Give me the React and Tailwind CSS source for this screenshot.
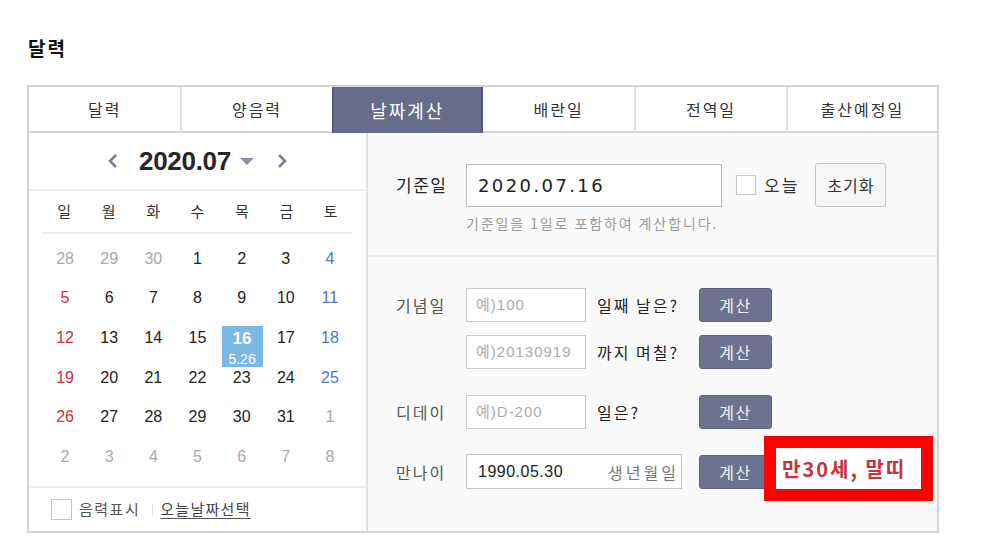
import React from 'react'

const kr = "font-['Noto_Sans_CJK_KR',sans-serif]"
const num = "font-['Liberation_Sans','Noto_Sans_CJK_KR',sans-serif]"

const tabs = ['달력', '양음력', '날짜계산', '배란일', '전역일', '출산예정일']

// [day, isOtherMonth]
const weeks = [
  [[28, 1], [29, 1], [30, 1], [1], [2], [3], [4]],
  [[5], [6], [7], [8], [9], [10], [11]],
  [[12], [13], [14], [15], [16], [17], [18]],
  [[19], [20], [21], [22], [23], [24], [25]],
  [[26], [27], [28], [29], [30], [31], [1, 1]],
  [[2, 1], [3, 1], [4, 1], [5, 1], [6, 1], [7, 1], [8, 1]],
]

const dayColor = (d, col) => {
  if (d[1]) return 'text-[#a9a9a9]'
  if (col === 0) return 'text-[#cc2f3b]'
  if (col === 6) return 'text-[#4f77c4]'
  return 'text-[#222]'
}

const CalcButton = () => (
  <button className={`${kr} w-[73px] h-[34px] rounded-[3px] bg-[#6c7290] border border-[#5c627f] text-[16px] leading-none text-[#f2f2f2] tracking-[1.5px]`}>
    계산
  </button>
)

const Calendar = () => (
  <div className="w-[339px] border-r-2 border-[#e2e2e2] bg-white flex flex-col">
    <div className="h-[58px] border-b-2 border-[#eeeeee] flex items-center justify-center">
      <svg width="12" height="16" viewBox="0 0 12 16" className="mr-[20px]">
        <polyline points="9,2 3,8 9,14" fill="none" stroke="#7c8199" strokeWidth="2.6" />
      </svg>
      <span className={`${num} text-[26px] font-bold tracking-[-0.3px] text-[#262626] leading-none`}>2020.07</span>
      <svg width="14" height="8" viewBox="0 0 14 8" className="ml-[9px] mt-[2px]">
        <polygon points="0,0 14,0 7,7" fill="#8b90a6" />
      </svg>
      <svg width="12" height="16" viewBox="0 0 12 16" className="ml-[22px]">
        <polyline points="3,2 9,8 3,14" fill="none" stroke="#7c8199" strokeWidth="2.6" />
      </svg>
    </div>
    <div className="mx-[13px] h-[43px] border-b-2 border-[#eeeeee] grid grid-cols-7 items-center">
      {['일', '월', '화', '수', '목', '금', '토'].map((w) => (
        <span key={w} className={`${kr} text-center text-[15px] text-[#333]`}>{w}</span>
      ))}
    </div>
    <div className="px-[14px] pt-[5px] grid grid-cols-7 auto-rows-[39.6px]">
      {weeks.map((week, r) =>
        week.map((d, c) => {
          if (r === 2 && c === 4) {
            return (
              <div key={`${r}-${c}`} className="relative">
                <div className="absolute left-[2px] top-[8px] w-[41px] h-[41px] bg-[#7bb8e5] flex flex-col items-center">
                  <span className={`${num} text-[17px] font-bold text-white leading-none mt-[4px]`}>16</span>
                  <span className={`${num} text-[14px] text-white leading-none mt-[5px]`}>5.26</span>
                </div>
              </div>
            )
          }
          return (
            <div key={`${r}-${c}`} className={`${num} flex items-center justify-center text-[16px] ${dayColor(d, c)}`}>
              {d[0]}
            </div>
          )
        })
      )}
    </div>
    <div className="mt-auto h-[45px] border-t-2 border-[#eeeeee] flex items-center pl-[22px]">
      <span className="w-[21px] h-[21px] border border-[#c6c6c6] bg-white" />
      <span className={`${kr} ml-[7px] text-[15px] text-[#555] tracking-[1.5px]`}>음력표시</span>
      <span className="ml-[12px] w-px h-[12px] bg-[#dddddd]" />
      <span className={`${kr} ml-[7px] text-[15px] text-[#444] tracking-[1.3px] underline underline-offset-[3px] decoration-[#555]`}>오늘날짜선택</span>
    </div>
  </div>
)

const RowLabel = ({ children }) => (
  <span className={`${kr} w-[70px] text-[16px] text-[#555] tracking-[2px]`}>{children}</span>
)

const SmallInput = ({ placeholder }) => (
  <div className={`${num} w-[120px] h-[34px] border border-[#c9c9c9] bg-white flex items-center pl-[9px] text-[15px] text-[#aaa] tracking-[1px]`}>
    {placeholder}
  </div>
)

const Calc = () => (
  <div className="flex-1 bg-[#fafafa] flex flex-col">
    <div className="h-[124px] border-b-2 border-[#efefef] pl-[28px] pt-[30px]">
      <div className="flex items-center">
        <span className={`${kr} w-[70px] text-[17px] text-[#222] tracking-[1.5px]`}>기준일</span>
        <div className="w-[256px] h-[43px] border border-[#bdbdbd] bg-white flex items-center pl-[11px]">
          <span className="font-['DejaVu_Sans',sans-serif] text-[18px] tracking-[2.4px] text-[#222]">2020.07.16</span>
        </div>
        <span className="ml-[14px] w-[20px] h-[20px] border border-[#c9c9c9] bg-white" />
        <span className={`${kr} ml-[8px] text-[17px] text-[#333] tracking-[2px]`}>오늘</span>
        <button className={`${kr} ml-[16px] w-[71px] h-[44px] rounded-[3px] border border-[#c4c4c4] bg-[#f6f6f6] text-[16px] text-[#333] tracking-[1px]`}>
          초기화
        </button>
      </div>
      <p className={`${kr} ml-[70px] mt-[6px] text-[14px] text-[#9a9a9a] leading-[20px] tracking-[1.9px]`}>기준일을 1일로 포함하여 계산합니다.</p>
    </div>
    <div className="pl-[28px] pt-[31px] flex flex-col">
      <div className="flex items-center">
        <RowLabel>기념일</RowLabel>
        <div className="w-[233px] flex items-center">
          <SmallInput placeholder="예)100" />
          <span className={`${kr} ml-[11px] text-[16px] text-[#222] tracking-[2px]`}>일째 날은?</span>
        </div>
        <CalcButton />
      </div>
      <div className="flex items-center mt-[13px]">
        <span className="w-[70px]" />
        <div className="w-[233px] flex items-center">
          <SmallInput placeholder="예)20130919" />
          <span className={`${kr} ml-[11px] text-[16px] text-[#222] tracking-[2px]`}>까지 며칠?</span>
        </div>
        <CalcButton />
      </div>
      <div className="flex items-center mt-[26px]">
        <RowLabel>디데이</RowLabel>
        <div className="w-[233px] flex items-center">
          <SmallInput placeholder="예)D-200" />
          <span className={`${kr} ml-[11px] text-[16px] text-[#222] tracking-[2px]`}>일은?</span>
        </div>
        <CalcButton />
      </div>
      <div className="relative flex items-center mt-[25px]">
        <RowLabel>만나이</RowLabel>
        <div className="w-[233px] flex items-center">
          <div className="w-[216px] h-[35px] border border-[#c4c4c4] bg-white flex items-center justify-between pl-[11px] pr-[2px]">
            <span className={`${num} text-[16px] text-[#222] tracking-[0.5px]`}>1990.05.30</span>
            <span className={`${kr} text-[16px] text-[#777] tracking-[3px]`}>생년월일</span>
          </div>
        </div>
        <CalcButton />
        <div className="absolute left-[368px] top-[-18px] w-[169px] h-[65px] border-[12px] border-[#ff0000] bg-white flex items-center pl-[6px]">
          <span className={`${kr} text-[20px] font-bold text-[#c8323c] leading-none tracking-[2px]`}>만30세, 말띠</span>
        </div>
      </div>
    </div>
  </div>
)

export default function App() {
  return (
    <div className="w-[985px] h-[556px] bg-white pl-[27px] pt-[36px]">
      <h1 className={`${kr} text-[19px] font-bold text-[#111] leading-[24px] pl-[1px] tracking-[2px]`}>달력</h1>
      <div className="mt-[25px] w-[912px] border-2 border-[#d3d3d3]">
        <div className="grid grid-cols-6 h-[46px]">
          {tabs.map((t, i) =>
            t === '날짜계산' ? (
              <div key={t} className={`${kr} bg-[#666c8a] border-x-2 border-[#545b7a] flex items-center justify-center text-[18px] text-white tracking-[2px]`}>
                {t}
              </div>
            ) : (
              <div
                key={t}
                className={`${kr} flex items-center justify-center border-b-2 border-b-[#d3d3d3] text-[16px] text-[#333] tracking-[2px] ${i > 0 && i !== 3 ? 'border-l-2 border-l-[#e3e3e3]' : ''}`}
              >
                {t}
              </div>
            )
          )}
        </div>
        <div className="flex h-[398px]">
          <Calendar />
          <Calc />
        </div>
      </div>
    </div>
  )
}
